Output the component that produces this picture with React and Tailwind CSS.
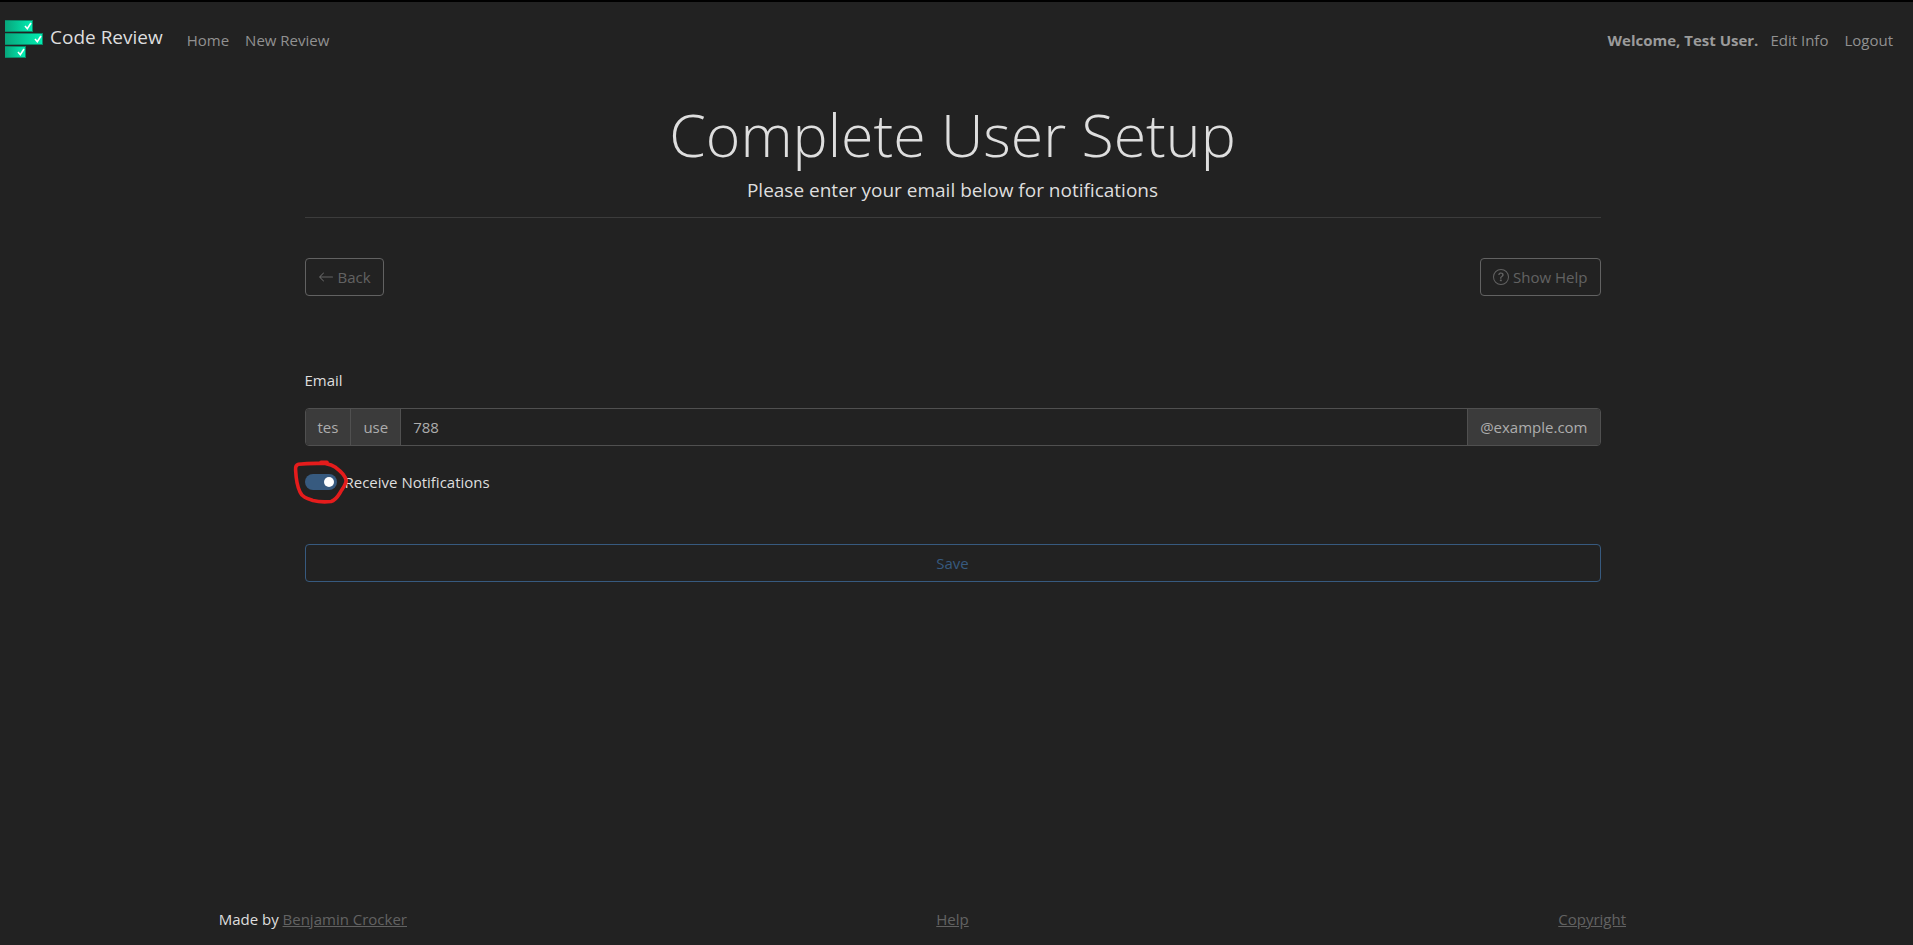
import React, { useState } from "react";

function Logo() {
  return (
    <svg width="38" height="38" viewBox="0 0 38 38" aria-hidden="true">
      <defs>
        <linearGradient id="bar" x1="0" x2="1" y1="0" y2="0">
          <stop offset="0" stopColor="#08a57b" />
          <stop offset="1" stopColor="#03edb2" />
        </linearGradient>
      </defs>
      <rect x="0" y="0" width="28" height="12" fill="#0a8968" />
      <rect x="0" y="13" width="38" height="12" fill="#0a8968" />
      <rect x="0" y="26" width="21" height="12" fill="#0a8968" />
      <rect x="0" y="1" width="27" height="10" fill="url(#bar)" />
      <rect x="0" y="14" width="37" height="10" fill="url(#bar)" />
      <rect x="0" y="27" width="20" height="10" fill="url(#bar)" />
      <g fill="none" stroke="#fff" strokeWidth="1.6">
        <path d="M20 6l2.3 2.7L26 3" />
        <path d="M30 19l2.3 2.7L36 16" />
        <path d="M13 32l2.3 2.7L19 29" />
      </g>
    </svg>
  );
}

function ArrowLeft() {
  return (
    <svg width="16" height="16" viewBox="0 0 16 16" fill="currentColor" aria-hidden="true">
      <path fillRule="evenodd" d="M15 8a.5.5 0 0 0-.5-.5H2.707l3.147-3.146a.5.5 0 1 0-.708-.708l-4 4a.5.5 0 0 0 0 .708l4 4a.5.5 0 0 0 .708-.708L2.707 8.5H14.5A.5.5 0 0 0 15 8z" />
    </svg>
  );
}

function QuestionCircle() {
  return (
    <svg width="16" height="16" viewBox="0 0 16 16" fill="currentColor" aria-hidden="true">
      <path d="M8 15A7 7 0 1 1 8 1a7 7 0 0 1 0 14zm0 1A8 8 0 1 0 8 0a8 8 0 0 0 0 16z" />
      <path d="M5.255 5.786a.237.237 0 0 0 .241.247h.825c.138 0 .248-.113.266-.25.09-.656.54-1.134 1.342-1.134.686 0 1.314.343 1.314 1.168 0 .635-.374.927-.965 1.371-.673.489-1.206 1.06-1.168 1.987l.003.217a.25.25 0 0 0 .25.246h.811a.25.25 0 0 0 .25-.25v-.105c0-.718.273-.927 1.01-1.486.609-.463 1.244-.977 1.244-2.056 0-1.511-1.276-2.241-2.673-2.241-1.267 0-2.655.59-2.75 2.286zm1.557 5.763c0 .533.425.927 1.01.927.609 0 1.028-.394 1.028-.927 0-.552-.42-.94-1.029-.94-.584 0-1.009.388-1.009.94z" />
    </svg>
  );
}

function ScribbleRing() {
  return (
    <svg
      className="pointer-events-none absolute -top-[15px] -left-[13px]"
      width="58"
      height="46"
      viewBox="0 0 58 46"
      fill="none"
      stroke="#e51c1c"
      strokeWidth="3.6"
      strokeLinecap="round"
      strokeLinejoin="round"
      aria-hidden="true"
    >
      <path d="M34 4.500C24 4.200 13 4.500 6.500 5.300C4 6 3.300 8 3.600 11C4 19 5 27 8 33C10 38 15 39.500 21 41.500C27 43 34 43 39 42.500C44 41 46 37 48.500 33C51 29 54.500 25 54 21C53 15 47 11 43 8C40 6 37 5.300 34 4.800" />
      <path d="M29 3.200L35 3.200" />
    </svg>
  );
}

const outlineButton =
  "flex h-[38px] items-center gap-1 rounded-[4px] border border-[#626262] px-3 text-[#626262]";
const addon = "flex items-center bg-[#3b3b3b] px-3 text-[#adadad]";

export default function App() {
  const [local, setLocal] = useState("788");
  const [notify, setNotify] = useState(true);

  return (
    <div className="flex min-h-screen flex-col border-t-2 border-black bg-[#222] pr-2 font-['Open_Sans','Noto_Sans',sans-serif] text-[15px] leading-6 text-[#dedede]">
      <nav className="flex items-center justify-between pt-[18px] pr-3 pb-3 pl-[5px]">
        <div className="flex items-center">
          <a href="#" className="flex items-center gap-[7px] text-[19px]">
            <Logo />
            <span className="pb-1">Code Review</span>
          </a>
          <div className="ml-6 flex gap-4 pt-0.5 text-[#919191]">
            <a href="#">Home</a>
            <a href="#">New Review</a>
          </div>
        </div>
        <div className="flex pt-0.5 text-[#919191]">
          <strong className="mr-3 font-bold text-[#9b9b9b]">Welcome, Test User.</strong>
          <a href="#" className="mr-4">Edit Info</a>
          <a href="#">Logout</a>
        </div>
      </nav>

      <main className="mx-auto w-full max-w-[1320px] grow px-3">
        <header className="border-b border-[#3c3c3c] pt-[26px] pb-3 text-center">
          <h1 className="text-[59px] leading-[76px] font-light">Complete User Setup</h1>
          <p className="pt-[3px] text-[19px] leading-[30px]">Please enter your email below for notifications</p>
        </header>

        <div className="mt-10 flex justify-between">
          <button type="button" className={outlineButton}>
            <ArrowLeft />
            Back
          </button>
          <button type="button" className={outlineButton}>
            <QuestionCircle />
            Show Help
          </button>
        </div>

        <form className="pt-[72px]" onSubmit={(e) => e.preventDefault()}>
          <label htmlFor="email" className="block">Email</label>
          <div className="mt-4 flex h-[38px] overflow-hidden rounded-[4px] border border-[#505050]">
            <span className={`${addon} border-r border-[#505050]`}>tes</span>
            <span className={`${addon} border-r border-[#505050]`}>use</span>
            <input
              id="email"
              type="text"
              value={local}
              onChange={(e) => setLocal(e.target.value)}
              className="min-w-0 grow bg-[#222] px-3 text-[#adadad] outline-none"
            />
            <span className={`${addon} border-l border-[#505050]`}>@example.com</span>
          </div>

          <div className="mt-6 flex h-6 items-center">
            <span className="relative flex">
              <input
                id="notify"
                type="checkbox"
                role="switch"
                checked={notify}
                onChange={(e) => setNotify(e.target.checked)}
                className="h-4 w-8 appearance-none rounded-full bg-[#555] p-[3px] before:block before:size-[10px] before:rounded-full before:bg-white checked:bg-[#375a7f] checked:before:ml-4"
              />
              <ScribbleRing />
            </span>
            <label htmlFor="notify" className="pl-2">Receive Notifications</label>
          </div>

          <button
            type="submit"
            className="mt-[50px] h-[38px] w-full rounded-[4px] border border-[#375a7f] text-[#375a7f]"
          >
            Save
          </button>
        </form>
      </main>

      <footer className="-mx-[7px] grid grid-cols-3 pb-[14px] text-center">
        <span>
          Made by <a href="#" className="text-[#626262] underline">Benjamin Crocker</a>
        </span>
        <a href="#" className="justify-self-center text-[#626262] underline">Help</a>
        <a href="#" className="justify-self-center text-[#626262] underline">Copyright</a>
      </footer>
    </div>
  );
}
